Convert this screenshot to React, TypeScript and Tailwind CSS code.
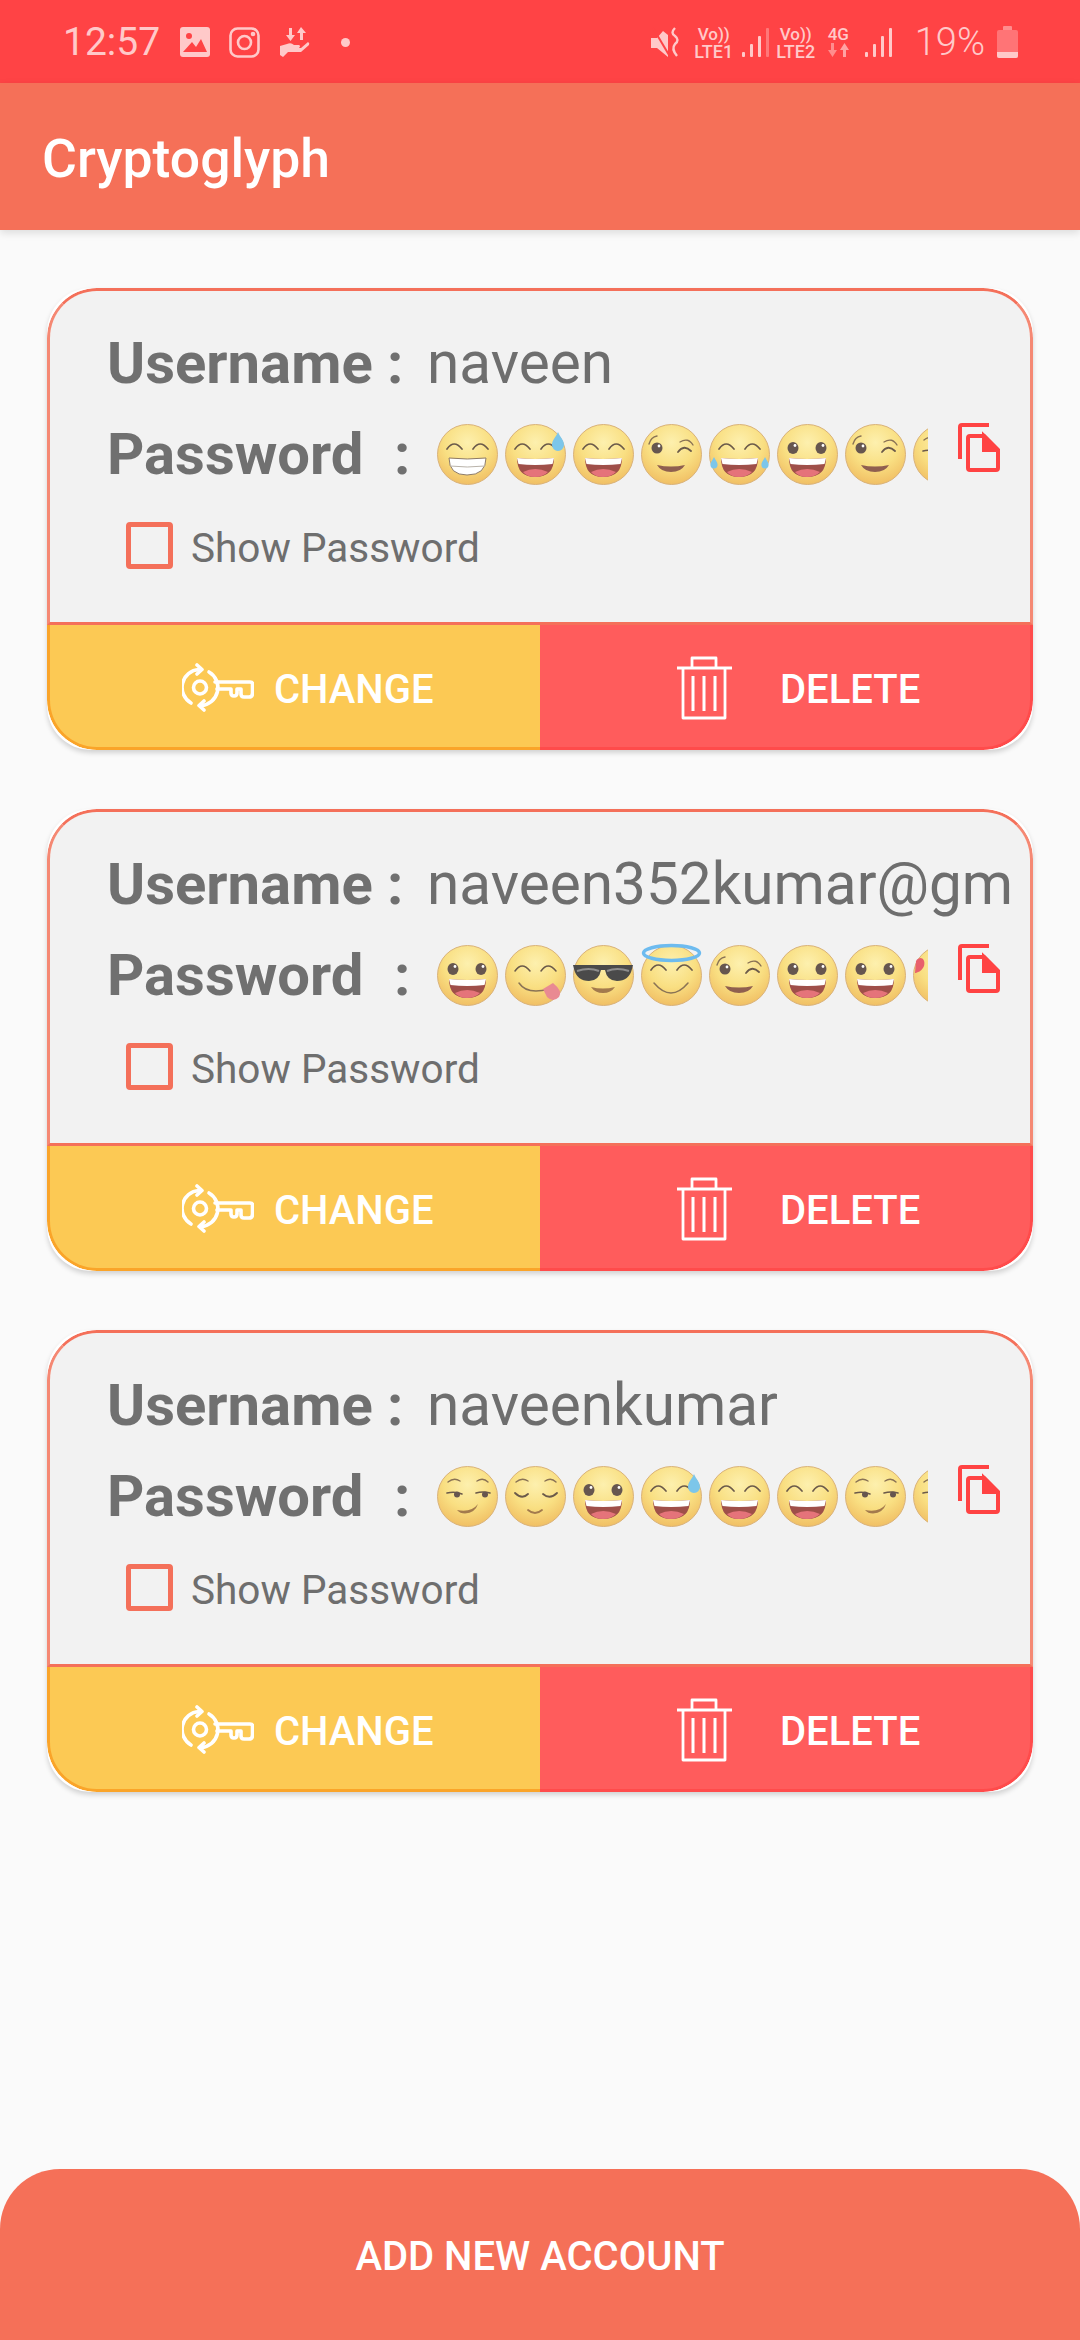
import { useId } from "react";

type Face = "grin" | "sweat" | "smile" | "wink" | "joy" | "smiley" | "yum" | "cool" | "halo" | "smirk" | "relieved" | "heart";

const ArcEyes = () => (
  <g fill="none" stroke="#6b5a4a" strokeWidth="1.7" strokeLinecap="round">
    <path d="M10 25 Q17 15 25 25" />
    <path d="M36 25 Q43 15 51 25" />
  </g>
);

const DotEyes = () => (
  <g fill="#66564f">
    <ellipse cx="16" cy="24" rx="5.5" ry="6" />
    <ellipse cx="44" cy="24" rx="5.5" ry="6" />
    <circle cx="18" cy="21.5" r="1.4" fill="#fff" />
    <circle cx="46" cy="21.5" r="1.4" fill="#fff" />
  </g>
);

const OpenMouth = () => (
  <g>
    <path d="M12 34 Q30 36 49 34 Q49 53 30 53 Q12 53 12 34Z" fill="#9f4f49" />
    <path d="M18 48 Q30 42 43 48 Q38 53 30 53 Q22 53 18 48Z" fill="#e5737a" />
    <path d="M12 34 Q30 36 49 34 L47.5 40 Q30 42 13.5 40Z" fill="#fff" />
  </g>
);

const Brows = () => (
  <g fill="none" stroke="#8a7355" strokeWidth="1.4" strokeLinecap="round">
    <path d="M11 16 Q17 11 23 15" />
    <path d="M40 15 Q46 11 51 16" />
  </g>
);

const Smirk = () => (
  <g>
    <Brows />
    <g fill="none" stroke="#6b5a4a" strokeWidth="1.6" strokeLinecap="round">
      <path d="M10 27 Q18 25 25 28" />
      <path d="M39 27 Q46 25 53 27" />
    </g>
    <circle cx="20" cy="28.5" r="3" fill="#66564f" />
    <circle cx="48" cy="28.5" r="3" fill="#66564f" />
    <path d="M20 44 Q34 47 41 38 Q38 47 28 47.5 Q23 47.5 20 44Z" fill="#a37a4d" />
  </g>
);

const Wink = () => (
  <g>
    <g fill="none" stroke="#8a7355" strokeWidth="1.4" strokeLinecap="round">
      <path d="M8 20 Q10 13 16 12" />
      <path d="M39 18 Q47 13 52 21" />
    </g>
    <circle cx="16" cy="24" r="5.5" fill="#66564f" />
    <circle cx="18" cy="22" r="1.4" fill="#fff" />
    <path d="M37 28 Q43 20 50 27" fill="none" stroke="#6b5a4a" strokeWidth="1.8" strokeLinecap="round" />
    <path d="M16 41 Q30 44 44 41 Q40 48 30 48 Q20 48 16 41Z" fill="#8f5f4f" />
  </g>
);

const Drop = ({ x, y, s = 1 }: { x: number; y: number; s?: number }) => (
  <path transform={`translate(${x} ${y}) scale(${s})`} d="M0 -10 C2 -5 6 -2 6 3 A6 6 0 0 1 -6 3 C-6 -2 -2 -5 0 -10Z" fill="#7cc6ea" />
);

function Emoji({ face }: { face: Face }) {
  const id = useId();
  return (
    <svg viewBox="0 0 61 61" className="w-[61px] h-[61px] shrink-0" overflow="visible">
      <defs>
        <radialGradient id={id} cx="50%" cy="30%" r="72%">
          <stop offset="0%" stopColor="#fdf0ae" />
          <stop offset="55%" stopColor="#f9df82" />
          <stop offset="100%" stopColor="#f0bd62" />
        </radialGradient>
      </defs>
      <circle cx="30.5" cy="30.5" r="30" fill={`url(#${id})`} stroke="#d9b27a" strokeWidth="1" />
      {face === "grin" && (
        <g>
          <ArcEyes />
          <path d="M12 34 Q30 36 49 34 Q49 51 30 51 Q12 51 12 34Z" fill="#fff" stroke="#8d7a66" strokeWidth="1" />
          <path d="M13 42 Q30 44 48 42" fill="none" stroke="#b9b3aa" strokeWidth="1" />
        </g>
      )}
      {face === "smile" && (
        <g>
          <ArcEyes />
          <OpenMouth />
        </g>
      )}
      {face === "sweat" && (
        <g>
          <ArcEyes />
          <OpenMouth />
          <Drop x={53} y={18} />
        </g>
      )}
      {face === "joy" && (
        <g>
          <ArcEyes />
          <OpenMouth />
          <Drop x={5} y={39} s={0.6} />
          <Drop x={56} y={39} s={0.6} />
        </g>
      )}
      {face === "wink" && <Wink />}
      {face === "smiley" && (
        <g>
          <DotEyes />
          <OpenMouth />
        </g>
      )}
      {face === "yum" && (
        <g>
          <g fill="none" stroke="#6b5a4a" strokeWidth="1.5" strokeLinecap="round">
            <path d="M10 26 Q17 16 25 26" />
            <path d="M36 26 Q43 16 51 26" />
            <path d="M14 38 Q22 50 44 44" stroke="#8a7355" />
          </g>
          <path d="M38 44 L48 38 Q58 46 54 52 Q48 58 42 52Z" fill="#e98a92" />
        </g>
      )}
      {face === "cool" && (
        <g>
          <path d="M0 20 H60 L59 24 Q56 36 44 36 Q34 36 32 25 H28 Q26 36 16 36 Q4 36 1 24Z" fill="#4a4a4a" />
          <path d="M4 26 Q16 22 26 26 M34 26 Q44 22 56 26" fill="none" stroke="#8d8d8d" strokeWidth="2" />
          <path d="M18 42 Q30 45 42 42 Q38 48 30 48 Q22 48 18 42Z" fill="#a37a4d" />
        </g>
      )}
      {face === "halo" && (
        <g>
          <ArcEyes />
          <path d="M13 38 Q30 58 47 38" fill="none" stroke="#8a7355" strokeWidth="1.5" strokeLinecap="round" />
          <ellipse cx="30.5" cy="8" rx="28" ry="7.5" fill="none" stroke="#6dbbef" strokeWidth="3.5" />
        </g>
      )}
      {face === "smirk" && <Smirk />}
      {face === "relieved" && (
        <g>
          <Brows />
          <g fill="none" stroke="#6b5a4a" strokeWidth="1.8" strokeLinecap="round">
            <path d="M10 27 Q17 34 23 28" />
            <path d="M38 28 Q45 34 52 27" />
            <path d="M23 44 Q30 50 37 44" stroke="#a37a4d" />
          </g>
        </g>
      )}
      {face === "heart" && <path d="M3 16 C7 10 13 14 11 21 C9 26 4 28 2 28 Z" fill="#e8606d" />}
    </svg>
  );
}

function CopyIcon() {
  return (
    <svg viewBox="0 0 42 49" className="w-[42px] h-[49px] ml-[30px] shrink-0 -mt-[14px]" fill="none" stroke="#ff4343" strokeWidth="4">
      <path d="M31 2 H4 Q2 2 2 4 V36" />
      <path d="M12 13 H26 L40 27 V45 Q40 47 38 47 H12 Q10 47 10 45 V15 Q10 13 12 13Z" />
      <path d="M26 13 L40 27 H26Z" fill="#ff4343" />
    </svg>
  );
}

function KeyIcon() {
  return (
    <svg viewBox="0 0 72 49" className="w-[72px] h-[49px] shrink-0" fill="none" stroke="#fff" strokeWidth="3.6" strokeLinecap="round" strokeLinejoin="round">
      <circle cx="18" cy="24.5" r="6.5" />
      <path d="M17 6.5 A18 18 0 0 0 9 40" />
      <path d="M19 42.5 A18 18 0 0 0 27 9" />
      <path d="M15 2 L20 6.5 L15 11" />
      <path d="M22 38 L17 42.5 L22 47" />
      <path d="M33 19 H68 Q70.5 19 70.5 21 V30 Q70.5 34 67 34 H62 Q59 34 59 31 V26 H55 V30 Q55 33 52 33 Q49 33 49 30 V26 H35" />
    </svg>
  );
}

function TrashIcon() {
  return (
    <svg viewBox="0 0 57 64" className="w-[57px] h-[64px] shrink-0" fill="none" stroke="#fff" strokeWidth="2.8" strokeLinejoin="round">
      <path d="M1 12 H56" />
      <path d="M16 12 V2 H40 V12" />
      <path d="M7 12 V62 H49 V12" />
      <path d="M17 20 V55 M28 20 V55 M39 20 V55" strokeWidth="3" />
    </svg>
  );
}

function Signal({ dim = false }: { dim?: boolean }) {
  return (
    <svg viewBox="0 0 27 29" className="w-[27px] h-[29px]" fill="#ffc9c9">
      <rect x="0" y="24" width="3" height="5" rx="1" />
      <rect x="8" y="16" width="3" height="13" rx="1" />
      <rect x="16" y="8" width="3" height="21" rx="1" />
      <rect x="24" y="0" width="3" height="29" rx="1" opacity={dim ? 0.4 : 1} />
    </svg>
  );
}

function SimTag({ line }: { line: string }) {
  return (
    <div className="flex flex-col items-center w-[40px] text-[17px] leading-[17px] font-medium pt-[2px]">
      <span>Vo{"))"}</span>
      <span className="text-[18px]">{line}</span>
    </div>
  );
}

function StatusBar() {
  return (
    <div className="h-[83px] bg-[#ff4345] flex items-center text-[#ffc9c9] shrink-0 pl-[63px] pr-[62px] pt-[1px]">
      <span className="text-[39px] leading-none w-[117px]">12:57</span>
      <svg viewBox="0 0 30 30" className="w-[30px] h-[30px]">
        <rect width="30" height="30" rx="3" fill="#ffc9c9" />
        <circle cx="9" cy="9" r="3" fill="#ff4345" />
        <path d="M3 25 L12 15 L16 20 L21 12 L27 25Z" fill="#ff4345" />
      </svg>
      <svg viewBox="0 0 31 31" className="w-[31px] h-[31px] ml-[19px]" fill="none" stroke="#ffc9c9" strokeWidth="2.6">
        <rect x="1.5" y="1.5" width="28" height="28" rx="7" />
        <circle cx="15.5" cy="15.5" r="6.5" />
        <circle cx="24" cy="7" r="1" fill="#ffc9c9" />
      </svg>
      <svg viewBox="0 0 31 30" className="w-[31px] h-[30px] ml-[19px]" fill="#ffc9c9">
        <path d="M10 1 H13 V8 H16 L11.5 14 L7 8 H10Z" />
        <path d="M22 0 L27 6 H24 V13 H21 V6 H18Z" />
        <path d="M1 19 L8 17 Q12 15 15 18 H20 Q22 19 20 21 H14 H22 L29 15 Q31 16 30 18 L22 25 H9 L4 30 L1 28Z" />
      </svg>
      <div className="w-[9px] h-[9px] rounded-full bg-[#ffc9c9] ml-[31px]" />
      <svg viewBox="0 0 31 30" className="w-[31px] h-[30px] ml-auto" fill="#ffc9c9">
        <path d="M0 11 H6 L12 4 L17 8 V30 L6 21 H0Z" />
        <path d="M2 1 L18 28" stroke="#ff4345" strokeWidth="2" />
        <path d="M24 1 Q19 6 24 9 Q29 13 24 17 Q20 22 26 29" fill="none" stroke="#ffc9c9" strokeWidth="2.4" />
      </svg>
      <div className="ml-[12px]"><SimTag line="LTE1" /></div>
      <div className="ml-[8px]"><Signal dim /></div>
      <div className="ml-[7px]"><SimTag line="LTE2" /></div>
      <div className="ml-[11px] flex flex-col items-center w-[23px] text-[17px] leading-[15px] font-medium">
        <span>4G</span>
        <svg viewBox="0 0 23 14" className="w-[23px] h-[14px] mt-[1px]" fill="#ff8d8d">
          <path d="M4 0 H7 V7 H10 L5.5 14 L1 7 H4Z" />
          <path d="M16 14 H19 V7 H22 L17.5 0 L13 7 H16Z" fill="#ffa3a3" />
        </svg>
      </div>
      <div className="ml-[15px]"><Signal /></div>
      <span className="text-[38px] leading-none ml-[23px] font-light">19%</span>
      <div className="ml-[12px] flex flex-col items-center">
        <div className="w-[9px] h-[4px] bg-[#ff8d8d] rounded-t-[1px]" />
        <div className="w-[21px] h-[28px] bg-[#ff7476] rounded-[2px] flex flex-col justify-end overflow-hidden">
          <div className="h-[6px] bg-[#ffc9c9]" />
        </div>
      </div>
    </div>
  );
}

function AccountCard({ username, faces }: { username: string; faces: Face[] }) {
  return (
    <div className="h-[462px] rounded-[44px] bg-white shadow-[0_3px_5px_rgba(0,0,0,0.16)]">
      <div className="h-full rounded-[50px] overflow-hidden flex flex-col">
        <div className="h-[337px] bg-[#f2f2f2] border-[3px] border-[#f4705a] border-x-[#f58873] pt-[27px] pl-[57px] rounded-t-[50px] text-[#707070] overflow-hidden">
          <div className="h-[91px] flex items-center text-[58px] whitespace-nowrap">
            <span className="font-bold w-[320px]">Username :</span>
            <span className="text-[#6e6e6e] text-[58.5px]">{username}</span>
          </div>
          <div className="h-[91px] flex items-center text-[58px] whitespace-nowrap">
            <span className="font-bold w-[287px]">Password</span>
            <span className="font-bold w-[43px]">:</span>
            <div className="w-[491px] flex gap-[7px] overflow-hidden shrink-0 py-[3px]">
              {faces.map((f, i) => (
                <Emoji key={i} face={f} />
              ))}
            </div>
            <CopyIcon />
          </div>
          <div className="h-[91px] flex items-center ml-[19px]">
            <div className="w-[47px] h-[47px] rounded-[4px] border-[5px] border-[#f4705a]" />
            <span className="ml-[18px] text-[40.5px] text-[#6e6e6e] mt-[5px]">Show Password</span>
          </div>
        </div>
        <div className="flex-1 flex text-white text-[40px] font-medium">
          <div className="w-[493px] bg-[#fcc954] border-b-[3px] border-l-[3px] border-[#faa429] rounded-bl-[50px] flex items-center pl-[132px] pt-[3px]">
            <KeyIcon />
            <span className="ml-[20px] pt-[5px]">CHANGE</span>
          </div>
          <div className="flex-1 bg-[#ff5c5c] border-b-[3px] border-r-[3px] border-[#ff4b4b] rounded-br-[50px] flex items-center pl-[136px] pt-[3px]">
            <TrashIcon />
            <span className="ml-[47px] pt-[5px]">DELETE</span>
          </div>
        </div>
      </div>
    </div>
  );
}

export default function App() {
  return (
    <div className="h-screen overflow-hidden flex flex-col bg-[#fafafa] font-[family-name:Roboto,sans-serif]">
      <StatusBar />
      <div className="h-[147px] bg-[#f57058] shrink-0 flex items-center pl-[42px] pt-[5px] shadow-[0_3px_8px_rgba(0,0,0,0.12)] z-10">
        <span className="text-[53.5px] font-medium text-white">Cryptoglyph</span>
      </div>
      <div className="flex flex-col gap-[59px] pt-[58px] pl-[47px] pr-[47px]">
        <AccountCard username="naveen" faces={["grin", "sweat", "smile", "wink", "joy", "smiley", "wink", "smirk"]} />
        <AccountCard username="naveen352kumar@gm" faces={["smiley", "yum", "cool", "halo", "wink", "smiley", "smiley", "heart"]} />
        <AccountCard username="naveenkumar" faces={["smirk", "relieved", "smiley", "sweat", "smile", "smile", "smirk", "smirk"]} />
      </div>
      <div className="mt-auto h-[171px] bg-[#f57058] rounded-t-[60px] flex items-center justify-center pt-[5px] text-white text-[40px] font-medium">
        ADD NEW ACCOUNT
      </div>
    </div>
  );
}
